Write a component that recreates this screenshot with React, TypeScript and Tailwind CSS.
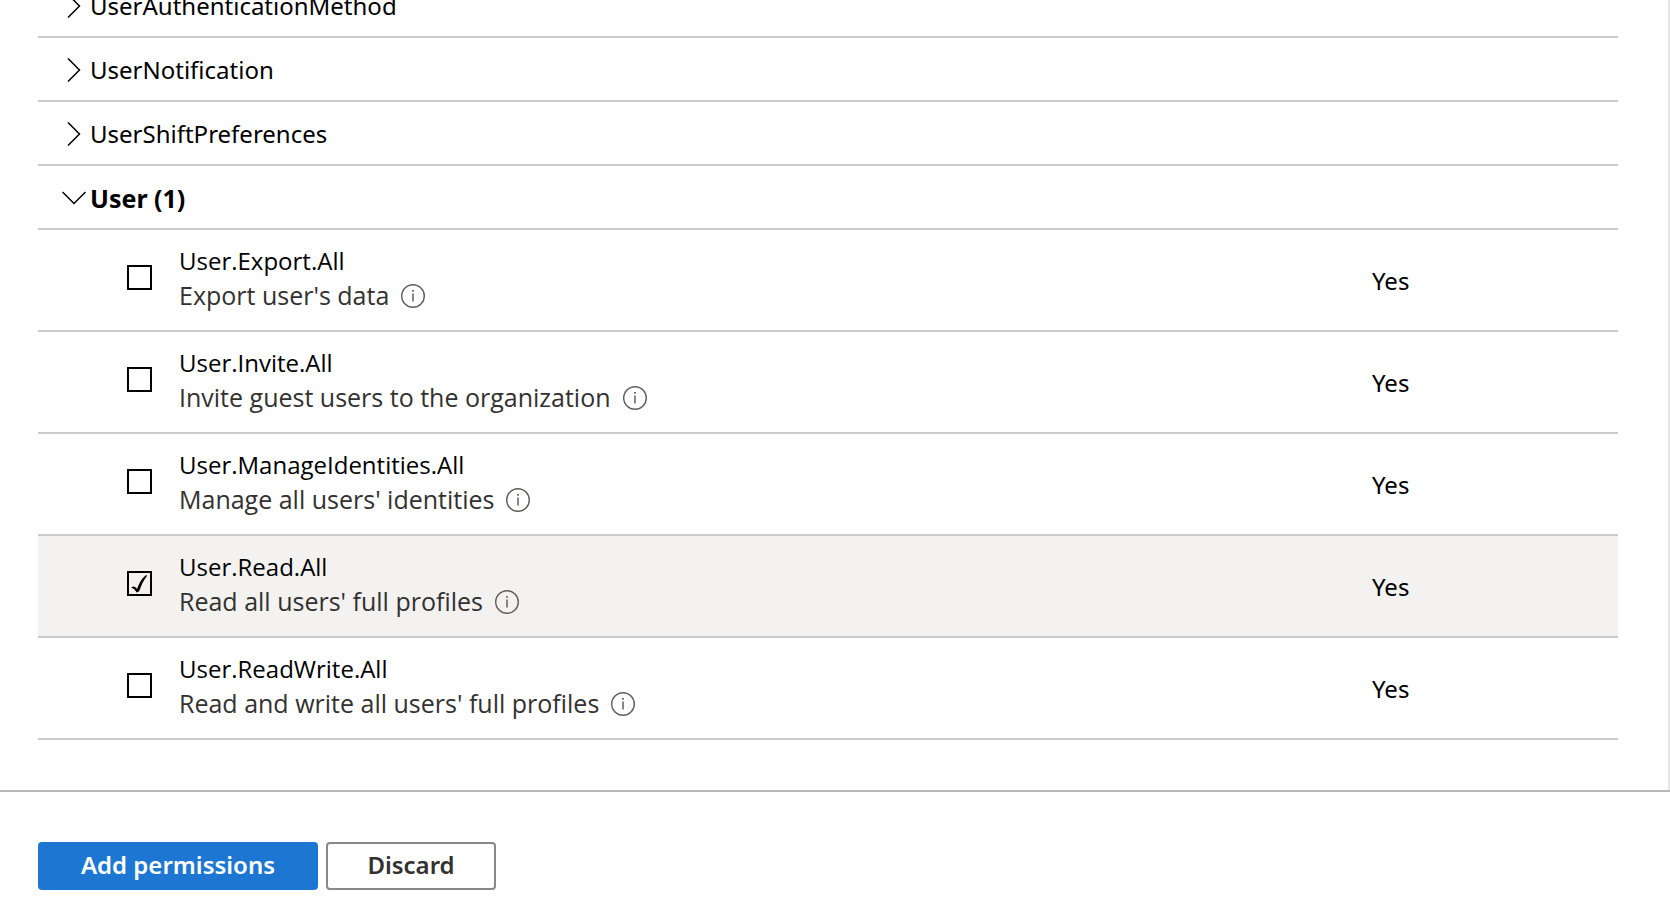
import { useState } from "react";

type Permission = {
  name: string;
  description: string;
  consent: string;
};

const collapsedGroups = [
  "UserAuthenticationMethod",
  "UserNotification",
  "UserShiftPreferences",
];

const permissions: Permission[] = [
  { name: "User.Export.All", description: "Export user's data", consent: "Yes" },
  { name: "User.Invite.All", description: "Invite guest users to the organization", consent: "Yes" },
  { name: "User.ManageIdentities.All", description: "Manage all users' identities", consent: "Yes" },
  { name: "User.Read.All", description: "Read all users' full profiles", consent: "Yes" },
  { name: "User.ReadWrite.All", description: "Read and write all users' full profiles", consent: "Yes" },
];

const Chevron = ({ open }: { open?: boolean }) => (
  <svg
    className="h-6 w-6 shrink-0"
    viewBox="0 0 24 24"
    fill="none"
    stroke="currentColor"
    strokeWidth="1.5"
    aria-hidden="true"
  >
    <path d={open ? "M0.5 6L12 17.5L23.5 6" : "M6 0.5L17.5 12L6 23.5"} />
  </svg>
);

const InfoIcon = () => (
  <svg className="h-6 w-6" viewBox="0 0 24 24" fill="none" stroke="currentColor" aria-hidden="true">
    <circle cx="12" cy="12" r="11.3" strokeWidth="1.4" />
    <path d="M12 9.5V17.5" strokeWidth="1.5" />
    <path d="M12 6V7.7" strokeWidth="1.7" />
  </svg>
);

const GroupRow = ({ title, open }: { title: string; open?: boolean }) => (
  <tr className="h-16">
    <td colSpan={3} className="border-b-2 border-[#cbcbcb] p-0 pt-[2px]">
      <button
        type="button"
        aria-expanded={!!open}
        className={`flex w-full items-center gap-1 pl-6 text-left leading-[34px] ${open ? "text-[25px] font-bold" : "text-[24px]"}`}
      >
        <Chevron open={open} />
        {title}
      </button>
    </td>
  </tr>
);

const App = () => {
  const [selected, setSelected] = useState<string[]>(["User.Read.All"]);

  const toggle = (name: string) => {
    setSelected((prev) =>
      prev.includes(name) ? prev.filter((n) => n !== name) : [...prev, name]
    );
  };

  return (
    <div className="flex h-screen flex-col bg-white font-['Noto_Sans','Open_Sans',sans-serif] text-black">
      <main className="flex min-h-0 flex-1 flex-col justify-end overflow-hidden border-r-2 border-[#e6e6e6] pr-[50px] pb-[50px] pl-[38px]">
        <table className="w-full table-fixed border-separate border-spacing-0">
          <colgroup>
            <col className="w-[141px]" />
            <col />
            <col className="w-[246px]" />
          </colgroup>
          <tbody>
            {collapsedGroups.map((title) => (
              <GroupRow key={title} title={title} />
            ))}
            <GroupRow title="User (1)" open />
            {permissions.map(({ name, description, consent }) => {
              const checked = selected.includes(name);
              return (
                <tr key={name} className={`h-[102px] ${checked ? "bg-[#f3f2f1]" : ""}`}>
                  <td className="border-b-2 border-[#cbcbcb] p-0 pb-[6px] pl-[89px] align-middle">
                    <span className="relative block h-[25px] w-[25px]">
                      <input
                        id={name}
                        type="checkbox"
                        checked={checked}
                        onChange={() => toggle(name)}
                        className="block h-[25px] w-[25px] appearance-none border-2 border-black"
                      />
                      {checked && (
                        <svg
                          className="pointer-events-none absolute inset-0 h-[25px] w-[25px]"
                          viewBox="0 0 25 25"
                          aria-hidden="true"
                        >
                          <path d="M4 16.5L6.2 15.4C8 15.4 9 16.6 10 18C12.3 11.5 15 7 18.8 4.2L20.3 4.6C16.8 9 14.2 14.5 12.2 20.3L9.6 21.5C8.3 19 6.5 17 4 16.5Z" />
                        </svg>
                      )}
                    </span>
                  </td>
                  <td className="border-b-2 border-[#cbcbcb] p-0 pb-1 align-middle font-['Open_Sans','Noto_Sans',sans-serif]">
                    <label htmlFor={name} className="block text-[24px] leading-[35px]">
                      {name}
                    </label>
                    <div className="flex items-center gap-3 text-[25px] leading-[35px] text-[#323130]">
                      {description}
                      <button type="button" aria-label={`About ${name}`} className="text-[#605e5c]">
                        <InfoIcon />
                      </button>
                    </div>
                  </td>
                  <td className="border-b-2 border-[#cbcbcb] p-0 align-middle text-[24px] leading-[35px]">
                    {consent}
                  </td>
                </tr>
              );
            })}
          </tbody>
        </table>
      </main>

      <footer className="flex gap-2 border-t-2 border-[#b8b8b8] px-[38px] pt-[50px] pb-7 text-[24px] leading-[42px] font-semibold">
        <button
          type="button"
          className="w-[280px] rounded-[4px] border-2 border-[#1d77d2] bg-[#1d77d2] pb-[2px] text-white"
        >
          Add permissions
        </button>
        <button
          type="button"
          className="w-[170px] rounded-[4px] border-2 border-[#8a8886] bg-white pb-[2px] text-[#323130]"
        >
          Discard
        </button>
      </footer>
    </div>
  );
};

export default App;
